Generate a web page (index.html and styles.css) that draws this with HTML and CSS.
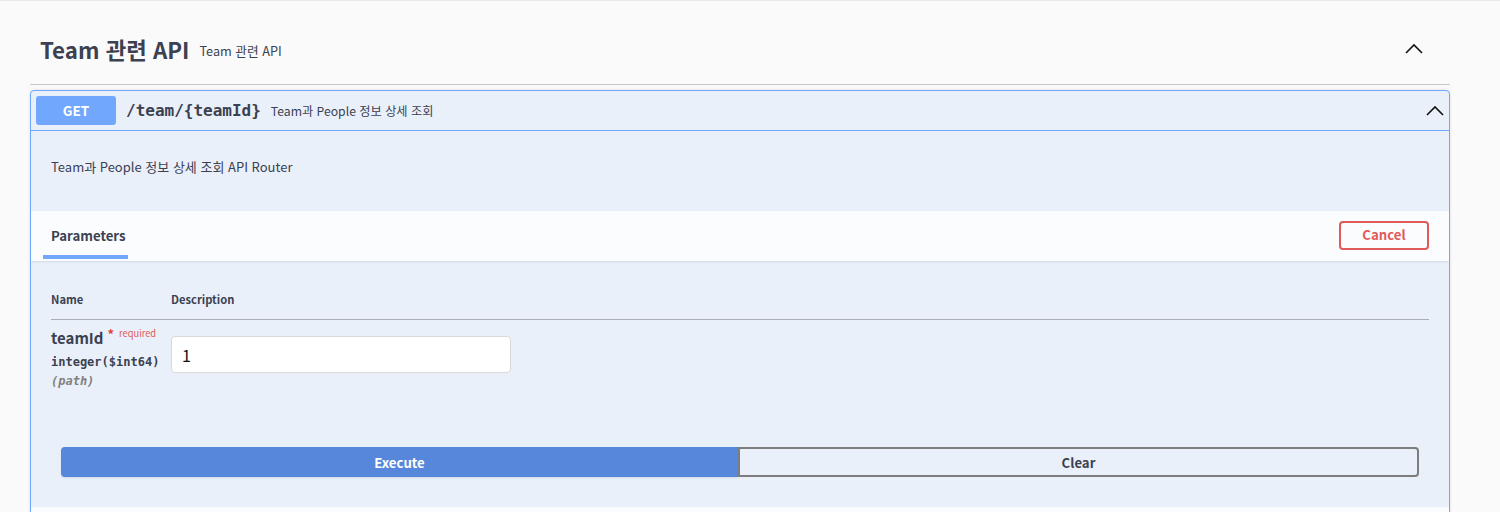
FILE: index.html
```html
<!DOCTYPE html>
<html lang="ko">
<head>
<meta charset="utf-8">
<title>Swagger UI</title>
<link rel="stylesheet" href="styles.css">
</head>
<body>
<div class="topline"></div>
<div class="wrapper">
  <section class="tag-section">
    <h3 class="tag">
      <span class="tag-name">Team 관련 API</span>
      <small class="tag-desc">Team 관련 API</small>
      <svg class="tag-arrow" width="20" height="20" viewBox="0 0 20 20"><path d="M2 14 L10 6 L18 14" fill="none" stroke="#111" stroke-width="1.6"/></svg>
    </h3>
    <div class="opblock">
      <div class="summary">
        <span class="method">GET</span>
        <span class="path">/team/{teamId}</span>
        <span class="summary-desc">Team과 People 정보 상세 조회</span>
        <svg class="op-arrow" width="20" height="20" viewBox="0 0 20 20"><path d="M2 14 L10 6 L18 14" fill="none" stroke="#111" stroke-width="1.6"/></svg>
      </div>
      <div class="body">
        <div class="description">
          <p>Team과 People 정보 상세 조회 API Router</p>
        </div>
        <div class="section-header">
          <div class="tab">Parameters</div>
          <button class="btn-cancel">Cancel</button>
        </div>
        <div class="params">
          <div class="params-head">
            <div class="col-name">Name</div>
            <div class="col-desc">Description</div>
          </div>
          <div class="param-row">
            <div class="col-name">
              <div class="param-name">teamId<span class="star">*</span><span class="required">required</span></div>
              <div class="param-type">integer($int64)</div>
              <div class="param-in">(path)</div>
            </div>
            <div class="col-desc">
              <input class="param-input" type="text" value="1">
            </div>
          </div>
        </div>
        <div class="execute-wrapper">
          <button class="btn-execute">Execute</button>
          <button class="btn-clear">Clear</button>
        </div>
        <div class="responses-header"></div>
      </div>
    </div>
  </section>
</div>
</body>
</html>
```

FILE: styles.css
```css
* { box-sizing: border-box; }
html, body {
  margin: 0;
  padding: 0;
  background: #fafafa;
  font-family: "Noto Sans CJK KR", "Noto Sans", sans-serif;
  color: #3b4151;
  overflow: hidden;
}
.topline {
  height: 1px;
  background: #e8e8e8;
}
.wrapper {
  width: 1420px;
  margin-left: 30px;
}
.tag {
  display: flex;
  align-items: center;
  height: 84px;
  margin: 0;
  padding: 13px 0 0 10px;
  border-bottom: 1px solid #c6c7cb;
}
.tag-name {
  font-size: 22.3px;
  font-weight: 700;
  color: #3b4151;
}
.tag-desc {
  font-size: 12.7px;
  font-weight: 400;
  padding: 0 10px;
  margin-top: 2px;
  flex: 1;
}
.tag-arrow {
  margin-right: 26px;
  margin-top: 0;
}
.opblock {
  margin-top: 5px;
  border: 1px solid #72a7fd;
  border-radius: 4px;
  background: #eaf0fa;
  box-shadow: 0 0 3px rgba(0,0,0,.12);
  overflow: hidden;
}
.summary {
  display: flex;
  align-items: center;
  height: 40px;
  padding: 0 5px;
  border-bottom: 1px solid #72a7fd;
}
.method {
  width: 80px;
  height: 29px;
  line-height: 29px;
  text-align: center;
  background: #71a8fe;
  color: #fff;
  border-radius: 3px;
  font-size: 13.5px;
  font-weight: 700;
}
.path {
  font-family: "DejaVu Sans Mono", monospace;
  font-size: 16px;
  font-weight: 700;
  color: #3b4151;
  padding: 0 10px;
}
.summary-desc {
  font-size: 12.2px;
  flex: 1;
  color: #3b4151;
}
.op-arrow {
  margin-right: -1px;
}
.description {
  padding: 15px 20px;
  height: 80px;
}
.description p {
  margin: 11px 0 0;
  font-size: 13px;
}
.section-header {
  display: flex;
  align-items: center;
  justify-content: space-between;
  height: 50px;
  padding: 0 20px 0 12px;
  background: rgba(255,255,255,.8);
  box-shadow: 0 1px 2px rgba(0,0,0,.1);
}
.tab {
  position: relative;
  align-self: stretch;
  display: flex;
  align-items: center;
  padding: 0 8px 2px 8px;
  width: 85px;
  font-size: 13.2px;
  font-weight: 700;
  color: #3b4151;
}
.tab::after {
  content: "";
  position: absolute;
  left: 0;
  right: 0;
  bottom: 2px;
  height: 4px;
  background: #72a7fd;
}
.btn-cancel {
  width: 90px;
  height: 29px;
  border: 2px solid #e05a5a;
  border-radius: 4px;
  background: transparent;
  color: #e05a5a;
  font-family: inherit;
  font-size: 13.2px;
  font-weight: 700;
  padding: 0 0 2px;
  margin-top: -2px;
}
.params {
  padding: 20px 20px 0 20px;
}
.params-head {
  display: flex;
  height: 39px;
  padding-top: 10px;
  border-bottom: 1px solid #a9aeb8;
  font-size: 11.2px;
  font-weight: 700;
}
.col-name {
  width: 120px;
  flex: none;
}
.col-desc {
  flex: 1;
}
.param-row {
  display: flex;
  padding-top: 8px;
}
.param-name {
  font-size: 15px;
  font-weight: 700;
  color: #3b4151;
  line-height: 20px;
}
.star {
  color: #e04040;
  font-size: 13px;
  margin-left: 4px;
  position: relative;
  top: -5px;
}
.required {
  color: #e05a5a;
  font-size: 9.3px;
  font-weight: 400;
  margin-left: 5px;
  position: relative;
  top: -7px;
}
.param-type {
  font-family: "DejaVu Sans Mono", monospace;
  font-size: 12px;
  font-weight: 700;
  margin-top: 3px;
  line-height: 18px;
}
.param-in {
  font-family: "DejaVu Sans Mono", monospace;
  font-size: 12px;
  font-weight: 700;
  font-style: italic;
  color: #808080;
  line-height: 20px;
}
.param-input {
  display: block;
  width: 340px;
  height: 37px;
  margin-top: 8px;
  border: 1px solid #d9d9d9;
  border-radius: 4px;
  background: #fff;
  font-family: "Noto Sans CJK KR", sans-serif;
  font-size: 16px;
  padding: 0 10px;
  color: #111;
}
.execute-wrapper {
  display: flex;
  padding: 56px 30px 30px 30px;
}
.btn-execute {
  flex: 1;
  height: 30px;
  border: none;
  border-radius: 4px 0 0 4px;
  background: #5787db;
  color: #fff;
  font-family: inherit;
  font-size: 13.2px;
  font-weight: 700;
  box-shadow: 0 1px 2px rgba(0,0,0,.1);
}
.btn-clear {
  flex: 1;
  height: 30px;
  border: 2px solid #7d7d7d;
  border-radius: 0 4px 4px 0;
  background: transparent;
  color: #3b4151;
  font-family: inherit;
  font-size: 13.2px;
  font-weight: 700;
}
.responses-header {
  height: 50px;
  background: rgba(255,255,255,.8);
}
```
